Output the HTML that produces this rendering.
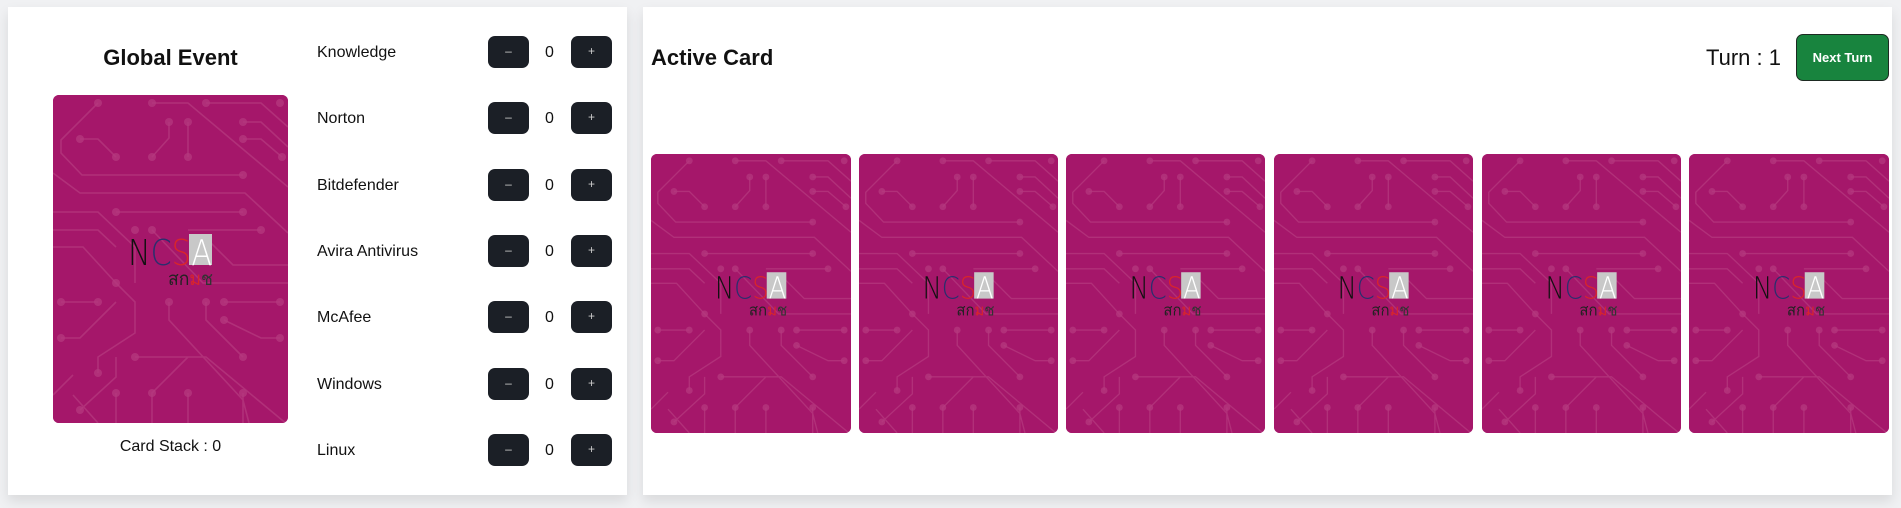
<!DOCTYPE html>
<html><head><meta charset="utf-8"><style>
*{box-sizing:border-box;margin:0;padding:0}
body{width:1901px;height:508px;background:#f0f1f3;font-family:"Liberation Sans","Noto Sans CJK SC",sans-serif;position:relative;overflow:hidden;color:#111}
.panel{position:absolute;top:7px;height:488px;background:#fff;box-shadow:0 6px 12px rgba(0,0,0,.10)}
.t{position:absolute;white-space:nowrap}
.btn{position:absolute;width:41px;height:32px;background:#1b1f26;border-radius:7px;color:#ccc;font-size:12px;text-align:center;line-height:31px}
.card{position:absolute;border-radius:6px;overflow:hidden;background:#a5176a}
.card svg{display:block;width:100%;height:100%}
.lbl{font-size:16px}
</style></head><body>
<svg width="0" height="0" style="position:absolute">
<defs>
<g id="cb">
<rect width="235" height="328" fill="#a5176a"/>
<g fill="none" stroke="#b5397f" stroke-width="1.6" opacity="0.75">
<path d="M99 8H135L235 92M153 8H208L235 32M45 8L8 45V58L29 80H190M27 44H45L63 62M116 27V43L99 62M135 27V62M190 27H208L235 52M190 44H208L229 62M0 78L27 98H192L235 138M63 117H190M0 117H45L82 152V188M0 135H45L63 152M0 152H30L63 188M8 207H45M63 188L82 207V238L45 262V278M8 243H27L63 207M116 207V225L190 305L196 328M153 207V225L190 262M171 207H227M171 225L208 243H227M27 315L63 282V262M63 298V328M135 298V328M190 298V328M99 328V298L135 262M82 262H153L235 330M135 135H208M99 135L150 188H235M235 170H180L150 140M45 328L20 300M0 300L20 280"/>
</g>
<g fill="#b5397f" opacity="0.75">
<circle cx="45" cy="8" r="4"/><circle cx="99" cy="8" r="4"/><circle cx="153" cy="8" r="4"/><circle cx="227" cy="8" r="4"/>
<circle cx="27" cy="44" r="4"/><circle cx="63" cy="62" r="4"/><circle cx="116" cy="27" r="4"/><circle cx="135" cy="27" r="4"/><circle cx="99" cy="62" r="4"/><circle cx="135" cy="62" r="4"/>
<circle cx="190" cy="27" r="4"/><circle cx="190" cy="44" r="4"/><circle cx="229" cy="62" r="4"/><circle cx="190" cy="80" r="4"/>
<circle cx="63" cy="117" r="4"/><circle cx="190" cy="117" r="4"/><circle cx="208" cy="135" r="4"/><circle cx="82" cy="135" r="4"/><circle cx="99" cy="135" r="4"/>
<circle cx="8" cy="207" r="4"/><circle cx="45" cy="207" r="4"/><circle cx="63" cy="188" r="4"/><circle cx="8" cy="243" r="4"/>
<circle cx="116" cy="207" r="4"/><circle cx="153" cy="207" r="4"/><circle cx="171" cy="207" r="4"/><circle cx="227" cy="207" r="4"/>
<circle cx="171" cy="225" r="4"/><circle cx="227" cy="243" r="4"/><circle cx="45" cy="278" r="4"/><circle cx="190" cy="262" r="4"/>
<circle cx="27" cy="315" r="4"/><circle cx="63" cy="298" r="4"/><circle cx="135" cy="298" r="4"/><circle cx="190" cy="298" r="4"/><circle cx="99" cy="298" r="4"/><circle cx="82" cy="262" r="4"/>
</g>
<rect x="136" y="139" width="23" height="31" fill="#c8c8c8"/>
<text x="75" y="170" font-family="DejaVu Sans,Liberation Sans,sans-serif" font-weight="200" font-size="36" textLength="84" lengthAdjust="spacingAndGlyphs"><tspan fill="#111">N</tspan><tspan fill="#2a2f6e">C</tspan><tspan fill="#d9252b">S</tspan><tspan fill="#fff">A</tspan></text>
<text x="115" y="190" font-family="Noto Sans CJK SC,sans-serif" font-size="19" textLength="45" lengthAdjust="spacingAndGlyphs"><tspan fill="#222">สก</tspan><tspan fill="#d9252b">ม</tspan><tspan fill="#333">ช</tspan></text>
</g>
</defs></svg>

<div class="panel" style="left:8px;width:619px"></div>
<div class="panel" style="left:643px;width:1249px"></div>

<div class="t" style="left:53px;width:235px;text-align:center;top:45px;font-size:22px;font-weight:bold">Global Event</div>
<div class="card" style="left:53px;top:95px;width:235px;height:328px"><svg viewBox="0 0 235 328" preserveAspectRatio="none"><use href="#cb"/></svg></div>
<div class="t" style="left:53px;width:235px;text-align:center;top:438px;font-size:16px">Card Stack : 0</div>

<div class="t lbl" style="left:317px;top:44px">Knowledge</div>
<div class="t lbl" style="left:317px;top:110px">Norton</div>
<div class="t lbl" style="left:317px;top:177px">Bitdefender</div>
<div class="t lbl" style="left:317px;top:243px">Avira Antivirus</div>
<div class="t lbl" style="left:317px;top:309px">McAfee</div>
<div class="t lbl" style="left:317px;top:376px">Windows</div>
<div class="t lbl" style="left:317px;top:442px">Linux</div>

<div class="btn" style="left:488px;top:36px">–</div><div class="t lbl" style="left:545px;top:44px">0</div><div class="btn" style="left:571px;top:36px">+</div>
<div class="btn" style="left:488px;top:102px">–</div><div class="t lbl" style="left:545px;top:110px">0</div><div class="btn" style="left:571px;top:102px">+</div>
<div class="btn" style="left:488px;top:169px">–</div><div class="t lbl" style="left:545px;top:177px">0</div><div class="btn" style="left:571px;top:169px">+</div>
<div class="btn" style="left:488px;top:235px">–</div><div class="t lbl" style="left:545px;top:243px">0</div><div class="btn" style="left:571px;top:235px">+</div>
<div class="btn" style="left:488px;top:301px">–</div><div class="t lbl" style="left:545px;top:309px">0</div><div class="btn" style="left:571px;top:301px">+</div>
<div class="btn" style="left:488px;top:368px">–</div><div class="t lbl" style="left:545px;top:376px">0</div><div class="btn" style="left:571px;top:368px">+</div>
<div class="btn" style="left:488px;top:434px">–</div><div class="t lbl" style="left:545px;top:442px">0</div><div class="btn" style="left:571px;top:434px">+</div>

<div class="t" style="left:651px;top:45px;font-size:22px;font-weight:bold">Active Card</div>
<div class="t" style="left:1706px;top:45px;font-size:22px">Turn : 1</div>
<div class="t" style="left:1796px;top:34px;width:93px;height:47px;background:#18843e;border:1px solid #1d2a22;border-radius:7px;color:#fff;font-size:13px;font-weight:bold;text-align:center;line-height:45px">Next Turn</div>

<div class="card" style="left:651px;top:154px;width:200px;height:279px"><svg viewBox="0 0 235 328" preserveAspectRatio="none"><use href="#cb"/></svg></div>
<div class="card" style="left:859px;top:154px;width:199px;height:279px"><svg viewBox="0 0 235 328" preserveAspectRatio="none"><use href="#cb"/></svg></div>
<div class="card" style="left:1066px;top:154px;width:199px;height:279px"><svg viewBox="0 0 235 328" preserveAspectRatio="none"><use href="#cb"/></svg></div>
<div class="card" style="left:1274px;top:154px;width:199px;height:279px"><svg viewBox="0 0 235 328" preserveAspectRatio="none"><use href="#cb"/></svg></div>
<div class="card" style="left:1482px;top:154px;width:199px;height:279px"><svg viewBox="0 0 235 328" preserveAspectRatio="none"><use href="#cb"/></svg></div>
<div class="card" style="left:1689px;top:154px;width:200px;height:279px"><svg viewBox="0 0 235 328" preserveAspectRatio="none"><use href="#cb"/></svg></div>
</body></html>
